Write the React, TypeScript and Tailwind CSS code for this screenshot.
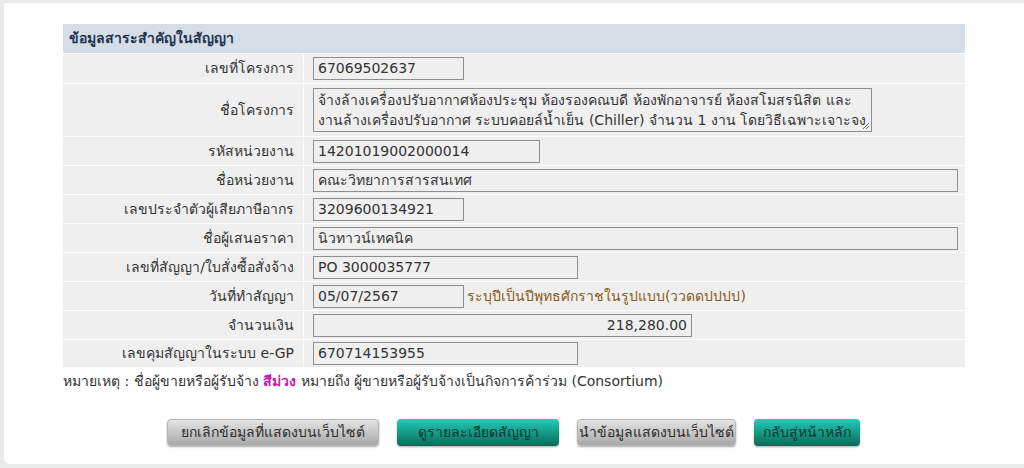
import React from 'react';

const font = "font-['Tahoma','DejaVu_Sans','Noto_Sans',sans-serif]";

type Row = {
  label: string;
  value: string;
  width: string;
  align?: 'right';
  extra?: string;
  h: string;
};

const rows: Row[] = [
  { label: 'เลขที่โครงการ', value: '67069502637', width: 'w-[151px]', h: 'h-[29px]' },
  { label: 'รหัสหน่วยงาน', value: '14201019002000014', width: 'w-[227px]', h: 'h-[28px]' },
  { label: 'ชื่อหน่วยงาน', value: 'คณะวิทยาการสารสนเทศ', width: 'w-[645px]', h: 'h-[28px]' },
  { label: 'เลขประจำตัวผู้เสียภาษีอากร', value: '3209600134921', width: 'w-[151px]', h: 'h-[28px]' },
  { label: 'ชื่อผู้เสนอราคา', value: 'นิวทาวน์เทคนิค', width: 'w-[645px]', h: 'h-[28px]' },
  { label: 'เลขที่สัญญา/ใบสั่งซื้อสั่งจ้าง', value: 'PO 3000035777', width: 'w-[265px]', h: 'h-[28px]' },
  { label: 'วันที่ทำสัญญา', value: '05/07/2567', width: 'w-[151px]', h: 'h-[28px]', extra: 'ระบุปีเป็นปีพุทธศักราชในรูปแบบ(ววดดปปปป)' },
  { label: 'จำนวนเงิน', value: '218,280.00', width: 'w-[379px]', h: 'h-[28px]', align: 'right' },
  { label: 'เลขคุมสัญญาในระบบ e-GP', value: '670714153955', width: 'w-[265px]', h: 'h-[27px]' },
];

function Field({ row }: { row: Row }) {
  return (
    <div className={`grid grid-cols-[240px_1fr] gap-x-px ${row.h}`}>
      <div className="bg-[#efefef] flex items-center justify-end pr-[9px]">{row.label}</div>
      <div className="bg-[#efefef] flex items-center pl-[9px]">
        <div
          className={`${row.width} h-[23px] border border-[#8f8f8f] bg-[#efefef] flex items-center px-[4px] ${
            row.align === 'right' ? 'justify-end' : ''
          }`}
        >
          {row.value}
        </div>
        {row.extra && <span className="ml-[3px] text-[#8b5a14]">{row.extra}</span>}
      </div>
    </div>
  );
}

function Btn({ label, teal, w }: { label: string; teal?: boolean; w: string }) {
  return (
    <button
      className={`${w} h-[27px] rounded-[4px] text-[14px] shadow-[0_1px_2px_rgba(0,0,0,0.35)] ${
        teal
          ? 'bg-gradient-to-b from-[#22cdb8] to-[#0b6b5a] text-[#0a3530]'
          : 'bg-gradient-to-b from-[#e4e4e4] to-[#a9a9a9] text-[#2c2c2c] border border-[#b5b5b5]'
      }`}
    >
      {label}
    </button>
  );
}

export default function App() {
  return (
    <div className={`w-[1024px] h-[468px] bg-[#e9eaea] pt-[3px] pl-[4px] pb-[4px] overflow-hidden ${font}`}>
      <div className="h-full bg-white rounded-bl-[6px] pt-[21px] pl-[59px] text-[14px] text-[#333]">
        <div className="w-[902px] flex flex-col gap-y-px">
          <div className="h-[29px] bg-[#d5dde6] flex items-center pl-[6px] font-bold text-[#1f3550]">
            ข้อมูลสาระสำคัญในสัญญา
          </div>
          <Field row={rows[0]} />
          <div className="grid grid-cols-[240px_1fr] gap-x-px h-[52px]">
            <div className="bg-[#efefef] flex items-center justify-end pr-[9px]">ชื่อโครงการ</div>
            <div className="bg-[#efefef] flex items-center pl-[9px]">
              <div className="relative w-[559px] h-[44px] border border-[#8f8f8f] bg-[#efefef] px-[4px] pt-[1px] leading-[20px] overflow-hidden whitespace-nowrap">
                <div>จ้างล้างเครื่องปรับอากาศห้องประชุม ห้องรองคณบดี ห้องพักอาจารย์ ห้องสโมสรนิสิต และ</div>
                <div>งานล้างเครื่องปรับอากาศ ระบบคอยล์น้ำเย็น (Chiller) จำนวน 1 งาน โดยวิธีเฉพาะเจาะจง</div>
                <svg className="absolute right-[1px] bottom-[1px]" width="8" height="8" viewBox="0 0 8 8">
                  <path d="M7 1 L1 7 M7 4 L4 7" stroke="#777" strokeWidth="1" />
                </svg>
              </div>
            </div>
          </div>
          {rows.slice(1).map((r) => (
            <Field key={r.label} row={r} />
          ))}
        </div>
        <div className="mt-[3px] h-[22px] flex items-center">
          หมายเหตุ : ชื่อผู้ขายหรือผู้รับจ้าง&nbsp;<span className="text-[#c21bb0] font-bold">สีม่วง</span>&nbsp;หมายถึง ผู้ขายหรือผู้รับจ้างเป็นกิจการค้าร่วม (Consortium)
        </div>
        <div className="mt-[27px] flex items-center gap-x-[18px] pl-[104px]">
          <Btn label="ยกเลิกข้อมูลที่แสดงบนเว็บไซต์" w="w-[212px]" />
          <Btn label="ดูรายละเอียดสัญญา" teal w="w-[162px]" />
          <Btn label="นำข้อมูลแสดงบนเว็บไซต์" w="w-[159px]" />
          <Btn label="กลับสู่หน้าหลัก" teal w="w-[106px]" />
        </div>
      </div>
    </div>
  );
}
